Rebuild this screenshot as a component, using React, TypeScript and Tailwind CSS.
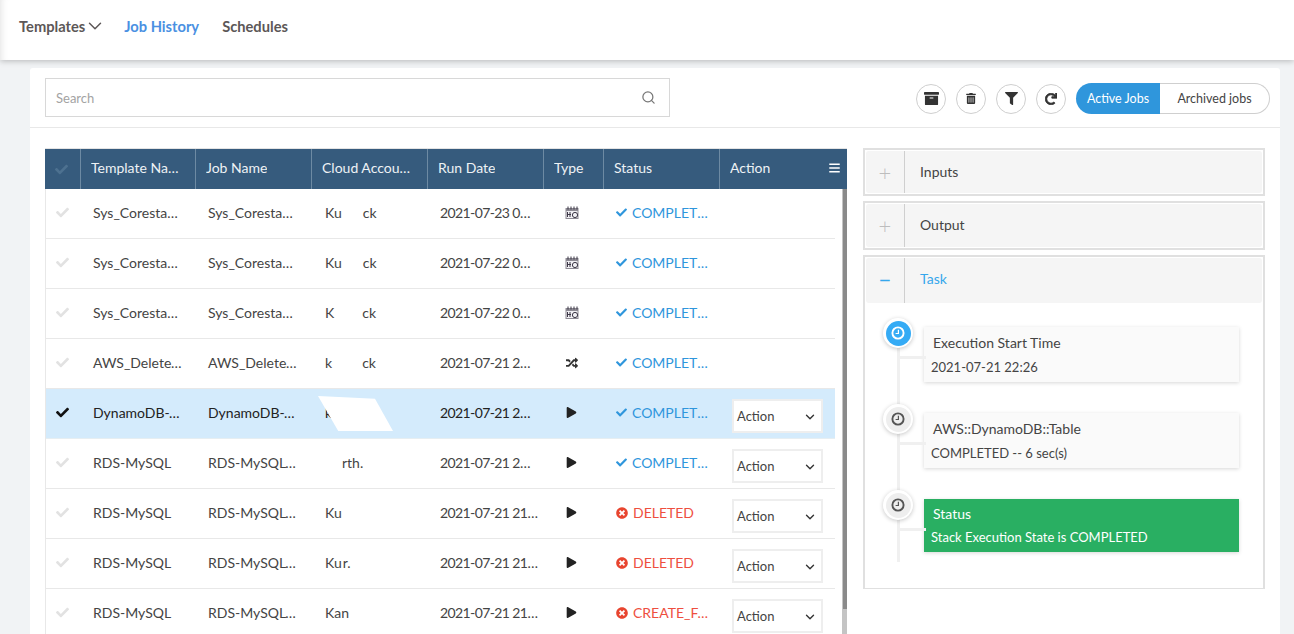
import { ChevronDown, Search } from "lucide-react";
import { FaArchive, FaBars, FaCheck, FaFilter, FaPlay, FaRandom, FaRedo, FaTimesCircle, FaTrashAlt } from "react-icons/fa";

interface Job {
  template: string;
  job: string;
  account: [string, string, string];
  date: string;
  type: "schedule" | "shuffle" | "play";
  status: "done" | "failed";
  statusText: string;
  action?: boolean;
  selected?: boolean;
}

const jobs: Job[] = [
  { template: "Sys_Corestack_Backup", job: "Sys_Corestack_Backup_1", account: ["Ku", "w-[21px]", "ck"], date: "2021-07-23 03:30:00", type: "schedule", status: "done", statusText: "COMPLETED_OK" },
  { template: "Sys_Corestack_Backup", job: "Sys_Corestack_Backup_2", account: ["Ku", "w-[21px]", "ck"], date: "2021-07-22 03:30:00", type: "schedule", status: "done", statusText: "COMPLETED_OK" },
  { template: "Sys_Corestack_Backup", job: "Sys_Corestack_Backup_3", account: ["K", "w-[28px]", "ck"], date: "2021-07-22 01:30:00", type: "schedule", status: "done", statusText: "COMPLETED_OK" },
  { template: "AWS_DeleteStack_Job", job: "AWS_DeleteStack_Job_1", account: ["k", "w-[30px]", "ck"], date: "2021-07-21 22:40:00", type: "shuffle", status: "done", statusText: "COMPLETED_OK" },
  { template: "DynamoDB-Template", job: "DynamoDB-Template_1", account: ["k", "w-0", ""], date: "2021-07-21 22:26:00", type: "play", status: "done", statusText: "COMPLETED_OK", action: true, selected: true },
  { template: "RDS-MySQL", job: "RDS-MySQL-Instance_1", account: ["", "w-[17px]", "rth."], date: "2021-07-21 22:10:00", type: "play", status: "done", statusText: "COMPLETED_OK", action: true },
  { template: "RDS-MySQL", job: "RDS-MySQL-Instance_2", account: ["Ku", "w-0", ""], date: "2021-07-21 21:50:00", type: "play", status: "failed", statusText: "DELETED", action: true },
  { template: "RDS-MySQL", job: "RDS-MySQL-Instance_3", account: ["Ku", "w-[1px]", "r."], date: "2021-07-21 21:30:00", type: "play", status: "failed", statusText: "DELETED", action: true },
  { template: "RDS-MySQL", job: "RDS-MySQL-Instance_4", account: ["Kan", "w-0", ""], date: "2021-07-21 21:10:00", type: "play", status: "failed", statusText: "CREATE_FAILED", action: true },
];

function CalendarIcon() {
  return (
    <svg viewBox="0 0 14 14" className="w-[14px] h-[14px]">
      <rect x="0.5" y="2" width="13" height="11" fill="#8d8a93" />
      <rect x="1.5" y="5" width="11" height="7" fill="#f1f0f4" />
      <path d="M3 0.5v3M6 0.5v3M9 0.5v3M12 0.5v3" stroke="#3b3645" strokeWidth="1" />
      <path d="M2.5 6v5M5 6v5M2 8.5h4" stroke="#3b3645" strokeWidth="1" />
      <circle cx="10" cy="9" r="2.6" fill="none" stroke="#3b3645" strokeWidth="1" />
    </svg>
  );
}

function ClockIcon({ className }: { className: string }) {
  return (
    <svg viewBox="0 0 14 14" className={className} fill="none" stroke="currentColor">
      <circle cx="7" cy="7" r="5.6" strokeWidth="1.9" />
      <path d="M7.4 3.8v3.7H4.6" strokeWidth="1.2" />
    </svg>
  );
}

function RoundButton({ children }: { children: React.ReactNode }) {
  return (
    <button className="w-[30px] h-[30px] rounded-full border border-[#cfcfcf] flex items-center justify-center text-[#333]">
      {children}
    </button>
  );
}

function JobRow({ row }: { row: Job }) {
  return (
    <div className={`flex h-[50px] items-center border-b pb-[2px] text-[14px] ${row.selected ? "bg-[#d4ebfc] border-[#e6eef2] text-[#222]" : "border-[#e8e8e8] text-[#444]"}`}>
      <div className="w-[35px] pl-[10px]">
        <FaCheck className={`w-[13px] h-[13px] ${row.selected ? "text-[#111]" : "text-[#e2e2e2]"}`} />
      </div>
      <div className="w-[115px] pl-[12px] pr-[14px] truncate">{row.template}</div>
      <div className="w-[116px] pl-[12px] pr-[15px] truncate">{row.job}</div>
      <div className="w-[116px] pl-[13px] flex">
        <span>{row.account[0]}</span>
        <span className={row.account[1]} />
        <span>{row.account[2]}</span>
      </div>
      <div className={`w-[116px] pl-[12px] truncate tracking-[-0.6px] ${row.date.includes(" 21:") ? "pr-[5px]" : "pr-[12px]"}`}>{row.date}</div>
      <div className="w-[60px] flex justify-center pr-[5px]">
        {row.type === "schedule" && <CalendarIcon />}
        {row.type === "shuffle" && <FaRandom className="w-[12px] h-[12px] text-[#333]" />}
        {row.type === "play" && <FaPlay className="w-[11px] h-[11px] text-[#222]" />}
      </div>
      <div className={`w-[116px] pl-[12px] pr-[10px] flex items-center gap-[5px] ${row.status === "done" ? "text-[#2f96dc]" : "text-[#ee4f3f]"}`}>
        {row.status === "done" ? <FaCheck className="w-[11px] h-[11px] shrink-0" /> : <FaTimesCircle className="w-[12px] h-[12px] shrink-0 text-[#e8452f]" />}
        <span className="truncate">{row.statusText}</span>
      </div>
      <div className="w-[115px] pl-[12px]">
        {row.action && (
          <button className="mt-[6px] w-[91px] h-[34px] bg-white border-2 border-[#eeeeee] flex items-center justify-between pl-[3px] pr-[4px] pt-[2px] text-[13px] text-[#444]">
            Action
            <ChevronDown className="w-[14px] h-[14px] text-[#333]" strokeWidth={2.4} />
          </button>
        )}
      </div>
    </div>
  );
}

function Panel({ sign, title, active, className }: { sign: string; title: string; active?: boolean; className: string }) {
  return (
    <div className={`flex bg-[#f5f5f5] rounded-[3px] ${className}`}>
      <div className={`w-[39px] flex items-center justify-center text-[22px] border-r border-[#cfcfcf] ${active ? "text-[#35a7ec] pb-[2px]" : "text-[#bdbdbd] font-light"}`}>
        {sign}
      </div>
      <div className={`pl-[15px] flex items-center text-[14px] ${active ? "text-[#35a7ec] pb-[4px]" : "text-[#444] pb-[2px]"}`}>{title}</div>
    </div>
  );
}

function TimelineItem({ title, text, green, first }: { title: string; text: string; green?: boolean; first?: boolean }) {
  return (
    <div className={`relative flex ${green ? "h-[62px]" : "h-[86px]"}`}>
      <div className="w-[30px] h-[30px] ml-[17px] rounded-full bg-white shadow-[0_1px_4px_rgba(0,0,0,0.22)] flex items-center justify-center z-10">
        <div className={`w-[25px] h-[25px] rounded-full flex items-center justify-center ${first ? "bg-[#35abf5] text-white" : "bg-[#eeeeee] text-[#555]"}`}>
          <ClockIcon className="w-[14px] h-[14px]" />
        </div>
      </div>
      <div className="absolute left-[32px] top-[38px] w-[28px] h-[3px] bg-[#f0f0f0]" />
      <div className={`ml-[11px] mt-[9px] w-[315px] pl-[7px] shadow-[0_1px_4px_rgba(0,0,0,0.16)] ${green ? "h-[53px] bg-[#29af62] text-white" : "h-[55px] bg-[#fafafa] text-[#444]"}`}>
        <div className={`pl-[2px] text-[14px] leading-[18px] ${green ? "pt-[6px]" : "pt-[7px]"}`}>{title}</div>
        <div className={`text-[13px] leading-[16px] ${green ? "mt-[6px]" : "mt-[7px]"}`}>{text}</div>
      </div>
    </div>
  );
}

export default function App() {
  return (
    <div className="h-screen overflow-hidden bg-[#f1f3f5] font-['Lato',sans-serif]">
      {/* Top nav */}
      <div className="h-[60px] bg-white shadow-[0_1px_6px_rgba(0,0,0,0.25),inset_8px_0_8px_-8px_rgba(0,0,0,0.15)] flex items-center pl-[19px] pb-[8px] text-[14.7px] font-bold text-[#5c5757] relative z-10">
        <span>Templates</span>
        <ChevronDown className="w-[22px] h-[22px] -ml-[1px]" strokeWidth={1.6} />
        <span className="ml-[18px] text-[#4a90e2]">Job History</span>
        <span className="ml-[23px]">Schedules</span>
      </div>

      <div className="ml-[30px] mr-[14px] mt-[8px] bg-white rounded-[3px] h-[570px]">
        {/* Toolbar */}
        <div className="h-[60px] border-b border-[#e8e8e8] flex items-start pt-[10px] pl-[15px] pr-[10px]">
          <div className="w-[625px] h-[39px] border border-[#d8d8d8] flex items-center justify-between pl-[10px] pr-[13px] text-[13px] text-[#a3a3a3]">
            <span className="pt-[2px]">Search</span>
            <Search className="w-[15px] h-[15px] text-[#777]" />
          </div>
          <div className="ml-auto mt-[5px] flex items-center gap-[10px]">
            <RoundButton><FaArchive className="w-[15px] h-[15px]" /></RoundButton>
            <RoundButton><FaTrashAlt className="w-[10px] h-[11px]" /></RoundButton>
            <RoundButton><FaFilter className="w-[13px] h-[13px]" /></RoundButton>
            <RoundButton><FaRedo className="w-[12px] h-[12px] stroke-current stroke-[30]" /></RoundButton>
            <div className="flex h-[31px] text-[12.5px]">
              <div className="w-[84px] rounded-l-full bg-[#2f96dc] text-white flex items-center justify-center pt-[1px]">Active Jobs</div>
              <div className="w-[110px] rounded-r-full border border-l-0 border-[#cfcfcf] text-[#444] flex items-center justify-center pt-[1px]">Archived jobs</div>
            </div>
          </div>
        </div>

        <div className="flex pl-[15px] pt-[20px]">
          {/* Job table */}
          <div className="relative w-[802px]">
            <div className="h-[41px] bg-[#365b7d] flex items-center text-[14px] text-[#eef2f5] border-t border-[#e4e4e4]">
              <div className="w-[35px] pl-[10px]"><FaCheck className="w-[13px] h-[13px] text-[#4d7190]" /></div>
              {[
                ["Template Name", "w-[115px] pr-[14px]"],
                ["Job Name", "w-[116px] pr-[14px]"],
                ["Cloud Account", "w-[116px] pr-[16px]"],
                ["Run Date", "w-[116px] pr-[14px]"],
                ["Type", "w-[60px] pr-[14px]"],
                ["Status", "w-[116px] pr-[14px]"],
                ["Action", "w-[128px] pr-[14px]"],
              ].map(([label, width]) => (
                <div key={label} className={`${width} h-full flex items-center border-l border-[#6d8aa3] pl-[10px] pb-[3px]`}>
                  <span className="truncate">{label}</span>
                </div>
              ))}
            </div>
            <FaBars className="absolute right-[7px] top-[14px] w-[11px] h-[12px] text-white" />
            <div className="border-l border-[#e8e8e8] w-[790px]">
              {jobs.map((row) => (
                <JobRow key={row.job} row={row} />
              ))}
            </div>
            {/* scrollbar */}
            <div className="absolute right-0 top-[41px] w-[5px] h-[460px] bg-[#c4c4c4]">
              <div className="ml-[1px] w-[4px] h-[420px] bg-[#8a8a8a]" />
            </div>
            {/* redaction smear on the selected row */}
            <div className="absolute left-[273px] top-[248px] w-[75px] h-[35px] bg-white [clip-path:polygon(0_0,76%_8%,100%_100%,27%_100%)]" />
          </div>

          {/* Side panels */}
          <div className="ml-[16px] w-[402px] flex flex-col gap-[5px]">
            <div className="h-[48px] border-2 border-[#e0e0e0] p-[1px] flex flex-col">
              <Panel sign="+" title="Inputs" className="h-full" />
            </div>
            <div className="h-[49px] border-2 border-[#e0e0e0] p-[1px] flex flex-col">
              <Panel sign="+" title="Output" className="h-full" />
            </div>
            <div className="h-[334px] border-2 border-[#e0e0e0] border-b-[1px] p-[1px]">
              <Panel sign="−" title="Task" active className="h-[45px]" />
              <div className="relative pt-[15px]">
                <div className="absolute left-[31px] top-[20px] w-[3px] h-[239px] bg-[#f0f0f0]" />
                <TimelineItem first title="Execution Start Time" text="2021-07-21 22:26" />
                <TimelineItem title="AWS::DynamoDB::Table" text="COMPLETED -- 6 sec(s)" />
                <TimelineItem green title="Status" text="Stack Execution State is COMPLETED" />
              </div>
            </div>
          </div>
        </div>
      </div>
    </div>
  );
}
